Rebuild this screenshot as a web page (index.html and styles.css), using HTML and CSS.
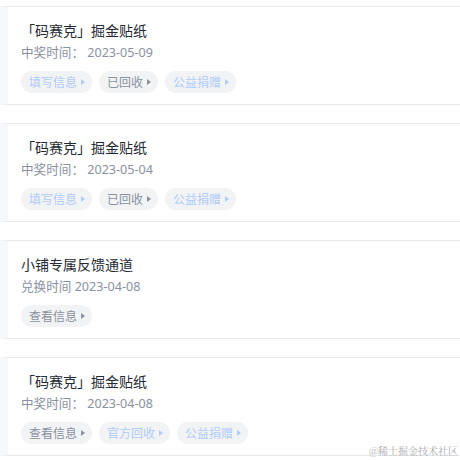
FILE: index.html
```html
<!DOCTYPE html>
<html lang="zh-CN">

<head>
    <meta charset="UTF-8" />
    <meta name="viewport" content="width=device-width, initial-scale=1.0" />
    <title>兑换记录</title>
    <link rel="stylesheet" href="styles.css">
</head>

<body>

    <div class="record-list">
        <div class="record">
            <div class="record-title">「码赛克」掘金贴纸</div>
            <div class="record-time">中奖时间：&nbsp;2023-05-09</div>
            <div class="actions">
                <span class="tag disabled">填写信息<i class="arrow"></i></span>
                <span class="tag">已回收<i class="arrow"></i></span>
                <span class="tag disabled">公益捐赠<i class="arrow"></i></span>
            </div>
        </div>

        <div class="record">
            <div class="record-title">「码赛克」掘金贴纸</div>
            <div class="record-time">中奖时间：&nbsp;2023-05-04</div>
            <div class="actions">
                <span class="tag disabled">填写信息<i class="arrow"></i></span>
                <span class="tag">已回收<i class="arrow"></i></span>
                <span class="tag disabled">公益捐赠<i class="arrow"></i></span>
            </div>
        </div>

        <div class="record">
            <div class="record-title">小铺专属反馈通道</div>
            <div class="record-time">兑换时间 2023-04-08</div>
            <div class="actions">
                <span class="tag">查看信息<i class="arrow"></i></span>
            </div>
        </div>

        <div class="record">
            <div class="record-title">「码赛克」掘金贴纸</div>
            <div class="record-time">中奖时间：&nbsp;2023-04-08</div>
            <div class="actions">
                <span class="tag">查看信息<i class="arrow"></i></span>
                <span class="tag disabled">官方回收<i class="arrow"></i></span>
                <span class="tag disabled">公益捐赠<i class="arrow"></i></span>
            </div>
        </div>
    </div>

    <div class="watermark">@稀土掘金技术社区</div>

</body>

</html>
```

FILE: styles.css
```css
* {
    box-sizing: border-box;
}

body {
    margin: 0;
    font-family: "Noto Sans", "Noto Sans CJK SC", sans-serif;
    background-color: #fff;
    color: #252933;
    position: relative;
    height: 460px;
    overflow: hidden;
}

.record-list {
    display: flex;
    flex-direction: column;
    gap: 18px;
    padding-top: 6px;
}

.record {
    height: 99px;
    padding: 13px 13px 11px;
    border-top: 1px solid #e8e9ed;
    border-bottom: 1px solid #e8e9ed;
    border-left: 8px solid #f7f8fa;
    background-color: #fff;
}

.record-title {
    font-size: 14px;
    line-height: 22px;
    color: #252933;
}

.record-time {
    font-size: 12.6px;
    line-height: 22px;
    color: #8a919f;
}

.actions {
    display: flex;
    gap: 7px;
    margin-top: 7px;
}

.tag {
    display: flex;
    align-items: center;
    height: 22px;
    padding: 0 7px 0 8px;
    border-radius: 11px;
    background-color: #f2f3f5;
    font-size: 12px;
    color: #8a919f;
}

.tag.disabled {
    color: #b0cbfa;
}

.arrow {
    width: 0;
    height: 0;
    margin-left: 4px;
    border-top: 3.5px solid transparent;
    border-bottom: 3.5px solid transparent;
    border-left: 4px solid currentColor;
}

.watermark {
    position: absolute;
    right: 2px;
    bottom: 2px;
    font-family: "Noto Serif CJK SC", "Noto Sans CJK SC", serif;
    font-size: 10px;
    color: #a7a9ad;
}
```
